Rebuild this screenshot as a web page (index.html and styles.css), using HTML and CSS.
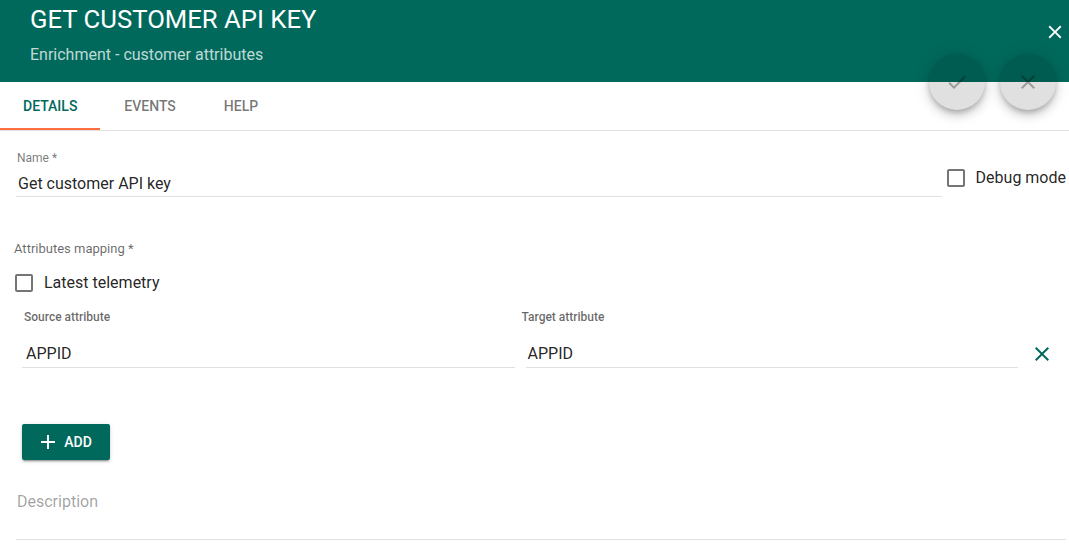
FILE: index.html
```html
<!DOCTYPE html>
<html lang="en">
<head>
  <meta charset="UTF-8">
  <meta name="viewport" content="width=device-width, initial-scale=1.0">
  <link rel="stylesheet" href="styles.css">
  <title>Get customer API key</title>
</head>
<body>

  <header class="dialog-header">
    <h1 class="dialog-title">GET CUSTOMER API KEY</h1>
    <div class="dialog-subtitle">Enrichment - customer attributes</div>
    <button class="header-close" aria-label="Close">
      <svg viewBox="0 0 24 24" width="22" height="22"><path d="M19 6.41L17.59 5 12 10.59 6.41 5 5 6.41 10.59 12 5 17.59 6.41 19 12 13.41 17.59 19 19 17.59 13.41 12z" fill="#fff"/></svg>
    </button>
  </header>

  <div class="fab-group">
    <button class="fab" aria-label="Save">
      <svg viewBox="0 0 24 24" width="24" height="24"><path d="M9 16.17L4.83 12l-1.42 1.41L9 19 21 7l-1.41-1.41z" fill="currentColor"/></svg>
    </button>
    <button class="fab" aria-label="Cancel">
      <svg viewBox="0 0 24 24" width="24" height="24"><path d="M19 6.41L17.59 5 12 10.59 6.41 5 5 6.41 10.59 12 5 17.59 6.41 19 12 13.41 17.59 19 19 17.59 13.41 12z" fill="currentColor"/></svg>
    </button>
  </div>

  <nav class="tabs">
    <div class="tab active">DETAILS</div>
    <div class="tab">EVENTS</div>
    <div class="tab">HELP</div>
  </nav>

  <main class="details">
    <div class="name-row">
      <div class="field name-field">
        <label class="field-label">Name *</label>
        <div class="field-value">Get customer API key</div>
      </div>
      <label class="check debug-check">
        <span class="box"></span>
        <span>Debug mode</span>
      </label>
    </div>

    <div class="section-label">Attributes mapping *</div>
    <label class="check telemetry-check">
      <span class="box"></span>
      <span>Latest telemetry</span>
    </label>

    <div class="mapping-head">
      <div class="col">Source attribute</div>
      <div class="col target-label">Target attribute</div>
      <div class="col-action"></div>
    </div>
    <div class="mapping-row">
      <div class="col"><div class="map-input">APPID</div></div>
      <div class="col"><div class="map-input target-input">APPID</div></div>
      <div class="col-action">
        <svg viewBox="0 0 24 24" width="24" height="24"><path d="M19 6.41L17.59 5 12 10.59 6.41 5 5 6.41 10.59 12 5 17.59 6.41 19 12 13.41 17.59 19 19 17.59 13.41 12z" fill="#00695c"/></svg>
      </div>
    </div>

    <button class="add-btn">
      <svg viewBox="0 0 24 24" width="24" height="24"><path d="M19 13h-6v6h-2v-6H5v-2h6V5h2v6h6v2z" fill="#fff"/></svg>
      <span>ADD</span>
    </button>

    <div class="field description-field">
      <div class="field-value placeholder">Description</div>
    </div>
  </main>

</body>
</html>
```

FILE: styles.css
```css
body {
  margin: 0;
  font-family: Roboto, "Noto Sans", sans-serif;
  background-color: #fff;
  color: rgba(0, 0, 0, 0.87);
  position: relative;
}

.dialog-header {
  background-color: #00695c;
  color: #fff;
  height: 82px;
  box-sizing: border-box;
  padding: 4px 30px 0;
  position: relative;
}

.dialog-title {
  margin: 0;
  font-size: 25.7px;
  font-weight: 400;
  line-height: 30px;
}

.dialog-subtitle {
  margin-top: 11px;
  font-size: 16px;
  color: rgba(255, 255, 255, 0.75);
}

.header-close {
  position: absolute;
  right: 3px;
  top: 21px;
  background: none;
  border: none;
  padding: 0;
  width: 22px;
  height: 22px;
}

.fab-group {
  position: absolute;
  top: 54px;
  right: 13px;
  display: flex;
  gap: 15px;
}

.fab {
  width: 56px;
  height: 56px;
  border-radius: 50%;
  border: none;
  padding: 0;
  display: flex;
  align-items: center;
  justify-content: center;
  background-color: rgba(0, 0, 0, 0.12);
  color: rgba(0, 0, 0, 0.3);
  box-shadow: 0 3px 5px -1px rgba(0, 0, 0, 0.2), 0 6px 10px 0 rgba(0, 0, 0, 0.14), 0 1px 18px 0 rgba(0, 0, 0, 0.12);
}

.tabs {
  display: flex;
  height: 48px;
  border-bottom: 1px solid #e0e0e0;
}

.tab {
  padding: 0 24px;
  display: flex;
  align-items: center;
  justify-content: center;
  font-size: 14px;
  font-weight: 500;
  color: rgba(0, 0, 0, 0.55);
}

.tab.active {
  padding: 0 23px;
  color: #00695c;
  box-shadow: inset 0 -2px 0 #ff6e40;
}

.details {
  padding: 0 3px 0 14px;
}

.name-row {
  display: flex;
  align-items: flex-start;
  gap: 5px;
}

.field {
  display: flex;
  flex-direction: column;
}

.name-field {
  flex: 1;
  margin-left: 2px;
  padding-top: 20px;
}

.field-label {
  font-size: 12px;
  line-height: 14px;
  color: rgba(0, 0, 0, 0.54);
  padding-left: 1px;
}

.field-value {
  font-size: 16px;
  line-height: 20px;
  padding: 9px 2px 2px;
  border-bottom: 1px solid rgba(0, 0, 0, 0.12);
}

.placeholder {
  color: rgba(0, 0, 0, 0.38);
}

.check {
  display: flex;
  align-items: center;
  gap: 11px;
  font-size: 16px;
}

.box {
  width: 14px;
  height: 14px;
  border: 2px solid rgba(0, 0, 0, 0.54);
  border-radius: 2px;
}

.debug-check {
  margin-top: 37px;
}

.section-label {
  margin-top: 44px;
  font-size: 13px;
  line-height: 15px;
  color: rgba(0, 0, 0, 0.6);
}

.telemetry-check {
  margin-top: 17px;
  margin-left: 1px;
}

.mapping-head {
  display: flex;
  margin-top: 18px;
  padding-left: 8px;
  font-size: 12px;
  font-weight: 500;
  line-height: 14px;
  color: rgba(0, 0, 0, 0.6);
}

.mapping-head .col:first-child {
  padding-left: 2px;
}

.mapping-row {
  display: flex;
  margin-top: 16px;
  padding-left: 8px;
}

.col {
  flex: 1;
}

.col + .col {
  margin-left: 11px;
}

.mapping-head .col.target-label {
  margin-left: 1px;
}

.col-action {
  width: 48px;
  display: flex;
  align-items: center;
  justify-content: center;
}

.map-input {
  font-size: 16px;
  line-height: 20px;
  padding: 4px 4px 3px;
  border-bottom: 1px solid rgba(0, 0, 0, 0.12);
}

.map-input.target-input {
  padding-left: 2px;
}

.add-btn {
  margin-top: 56px;
  margin-left: 8px;
  height: 36px;
  width: 88px;
  display: flex;
  align-items: center;
  justify-content: center;
  gap: 4px;
  padding: 0 8px 0 4px;
  border: none;
  border-radius: 2px;
  background-color: #00695c;
  color: #fff;
  font-family: Roboto, sans-serif;
  font-size: 14px;
  font-weight: 500;
  box-shadow: 0 3px 1px -2px rgba(0, 0, 0, 0.2), 0 2px 2px 0 rgba(0, 0, 0, 0.14), 0 1px 5px 0 rgba(0, 0, 0, 0.12);
}

.description-field {
  margin-top: 28px;
  margin-left: 2px;
}

.description-field .field-value {
  padding: 4px 1px 27px;
}
```
